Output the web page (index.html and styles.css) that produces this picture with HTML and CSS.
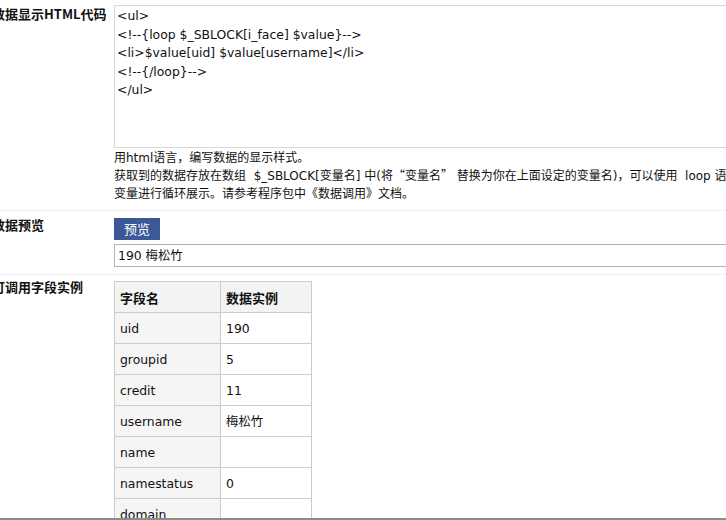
FILE: index.html
```html
<!DOCTYPE html>
<html lang="zh-CN">
<head>
<meta charset="utf-8">
<title>数据调用</title>
<link rel="stylesheet" href="styles.css">
</head>
<body>
<div class="page">
  <div class="form">
    <div class="row row-code">
      <div class="label">数据显示HTML代码</div>
      <div class="field">
        <textarea class="code" spellcheck="false">&lt;ul&gt;
&lt;!--{loop $_SBLOCK[i_face] $value}--&gt;
&lt;li&gt;$value[uid] $value[username]&lt;/li&gt;
&lt;!--{/loop}--&gt;
&lt;/ul&gt;</textarea>
        <div class="desc">
          <div class="line">用html语言<span class="cjk">，</span>编写数据的显示样式。</div>
          <div class="line">获取到的数据存放在数组&nbsp; $_SBLOCK[变量名] 中(将<span class="cjk">“</span>变量名<span class="cjk">”</span> 替换为你在上面设定的变量名)<span class="cjk">，</span>可以使用&nbsp; loop 语句对数组</div>
          <div class="line">变量进行循环展示。请参考程序包中《数据调用》文档。</div>
        </div>
      </div>
    </div>
    <div class="row row-preview">
      <div class="label">数据预览</div>
      <div class="field">
        <button class="btn" type="button">预览</button>
        <div class="preview">190 梅松竹</div>
      </div>
    </div>
    <div class="row row-fields">
      <div class="label">可调用字段实例</div>
      <div class="field">
        <table class="fields">
          <colgroup><col class="c1"><col class="c2"></colgroup>
          <thead>
            <tr><th>字段名</th><th>数据实例</th></tr>
          </thead>
          <tbody>
            <tr><td>uid</td><td>190</td></tr>
            <tr><td>groupid</td><td>5</td></tr>
            <tr><td>credit</td><td>11</td></tr>
            <tr><td>username</td><td>梅松竹</td></tr>
            <tr><td>name</td><td></td></tr>
            <tr><td>namestatus</td><td>0</td></tr>
            <tr><td>domain</td><td></td></tr>
            <tr><td>email</td><td></td></tr>
          </tbody>
        </table>
      </div>
    </div>
  </div>
</div>
</body>
</html>
```

FILE: styles.css
```css
html, body {
  margin: 0;
  padding: 0;
  background: #fff;
  overflow: hidden;
}

body {
  font-family: "DejaVu Sans", "Noto Sans CJK SC", sans-serif;
  font-size: 12px;
  color: #111;
}

.page {
  width: 726px;
  height: 518px;
  overflow: hidden;
  border-bottom: 2px solid #8c8c8c;
}

.form {
  margin-left: -8px;
  width: 900px;
}

.row {
  display: grid;
  grid-template-columns: 122px 1fr;
  border-bottom: 1px solid #eeeeee;
}

.label {
  font-family: "Noto Sans CJK SC", "DejaVu Sans", sans-serif;
  font-weight: bold;
  font-size: 13px;
  line-height: 18px;
  white-space: nowrap;
}

.row-code {
  padding: 5px 0 7px;
}

.code {
  display: block;
  box-sizing: border-box;
  width: 640px;
  height: 143px;
  margin: 0;
  padding: 1px 2px;
  border: 1px solid #d8d8d8;
  font-family: "DejaVu Sans", "Noto Sans CJK SC", sans-serif;
  font-size: 12.4px;
  line-height: 18.5px;
  color: #111;
  resize: none;
  overflow: hidden;
  background: #fff;
}

.desc {
  margin-top: 1px;
  line-height: 18px;
  white-space: nowrap;
}

.desc .line {
  height: 18px;
  overflow: visible;
}

.cjk {
  font-family: "Noto Sans CJK SC", sans-serif;
  display: inline-block;
  width: 12px;
  line-height: 12px;
  text-align: center;
}

.row-preview {
  padding: 7px 0 7px;
}

.row-preview .label {
  margin-top: -2px;
}

.btn {
  display: block;
  width: 46px;
  height: 22px;
  padding: 0;
  border: 0;
  background: #3b5998;
  color: #fff;
  font-family: "Noto Sans CJK SC", sans-serif;
  font-size: 13px;
  line-height: 22px;
  text-align: center;
}

.preview {
  box-sizing: border-box;
  margin-top: 4px;
  width: 640px;
  height: 23px;
  border: 1px solid #b4b4b4;
  padding: 0 3px;
  line-height: 21px;
  font-size: 12.4px;
}

.row-fields {
  padding-top: 6px;
  border-bottom: 0;
}

.row-fields .label {
  margin-top: -3px;
}

.fields {
  border-collapse: collapse;
  table-layout: fixed;
  width: 197px;
}

.fields col.c1 { width: 106px; }
.fields col.c2 { width: 91px; }

.fields th,
.fields td {
  height: 30px;
  padding: 0 5px;
  border: 1px solid #cccccc;
  text-align: left;
  font-size: 12.4px;
  white-space: nowrap;
}

.fields th {
  font-family: "Noto Sans CJK SC", sans-serif;
  font-weight: bold;
  font-size: 13px;
  background: #f3f3f3;
}

.fields td:first-child {
  background: #f5f5f5;
}
```
